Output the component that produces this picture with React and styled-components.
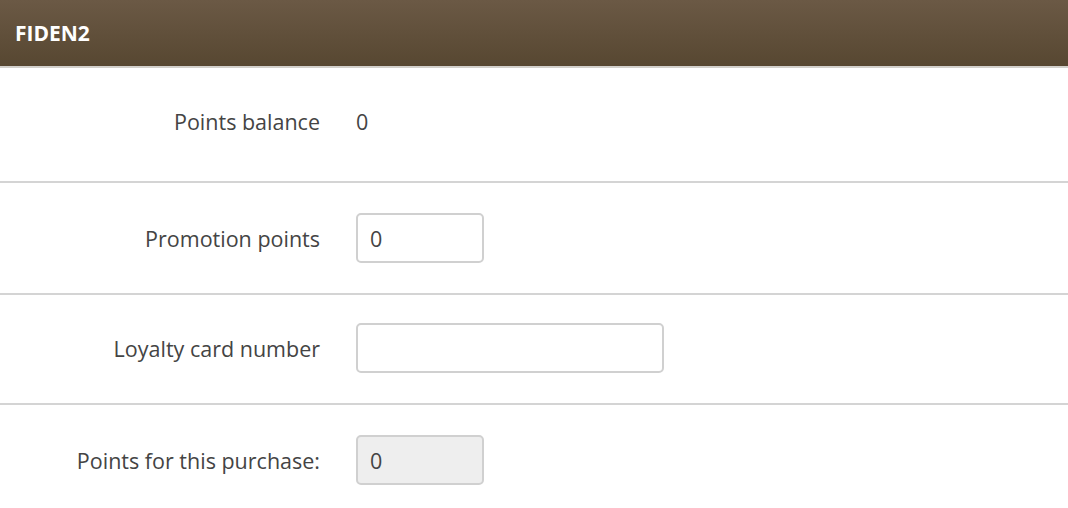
import React from "react";
import styled, { createGlobalStyle } from "styled-components";

const Global = createGlobalStyle`
  body {
    margin: 0;
    background: #fff;
    font-family: "Open Sans", "Liberation Sans", sans-serif;
  }
`;

const Header = styled.div`
  height: 66px;
  display: flex;
  align-items: center;
  padding: 0 15px;
  background: linear-gradient(to bottom, #6b5945, #574731);
  border-bottom: 2px solid #d2d0cb;
  color: #fff;
  font-size: 21px;
  font-weight: 700;
`;

const Row = styled.div`
  display: grid;
  grid-template-columns: 320px 1fr;
  column-gap: 36px;
  align-items: center;
  min-height: 50px;
  padding: ${(p) => p.$pad || "30px 0"};
  border-bottom: ${(p) => (p.$last ? "none" : "2px solid #d4d4d4")};
`;

const Label = styled.div`
  text-align: right;
  font-size: 21.5px;
  color: #444;
`;

const Value = styled.div`
  font-size: 21.5px;
  color: #444;
`;

const Input = styled.input`
  box-sizing: border-box;
  display: block;
  width: ${(p) => p.$w}px;
  height: 50px;
  padding: 0 12px;
  border: 2px solid #d0d0d0;
  border-radius: 5px;
  font-family: inherit;
  font-size: 21.5px;
  color: #444;
  background: ${(p) => (p.disabled ? "#eeeeee" : "#fff")};
  outline: none;
`;

export default function App() {
  return (
    <>
      <Global />
      <Header>FIDEN2</Header>
      <Row $pad="28px 0 35px">
        <Label>Points balance</Label>
        <Value>0</Value>
      </Row>
      <Row>
        <Label>Promotion points</Label>
        <div>
          <Input $w={128} defaultValue="0" />
        </div>
      </Row>
      <Row $pad="28px 0 30px">
        <Label>Loyalty card number</Label>
        <div>
          <Input $w={308} defaultValue="" />
        </div>
      </Row>
      <Row $last>
        <Label>Points for this purchase:</Label>
        <div>
          <Input $w={128} value="0" disabled readOnly />
        </div>
      </Row>
    </>
  );
}
